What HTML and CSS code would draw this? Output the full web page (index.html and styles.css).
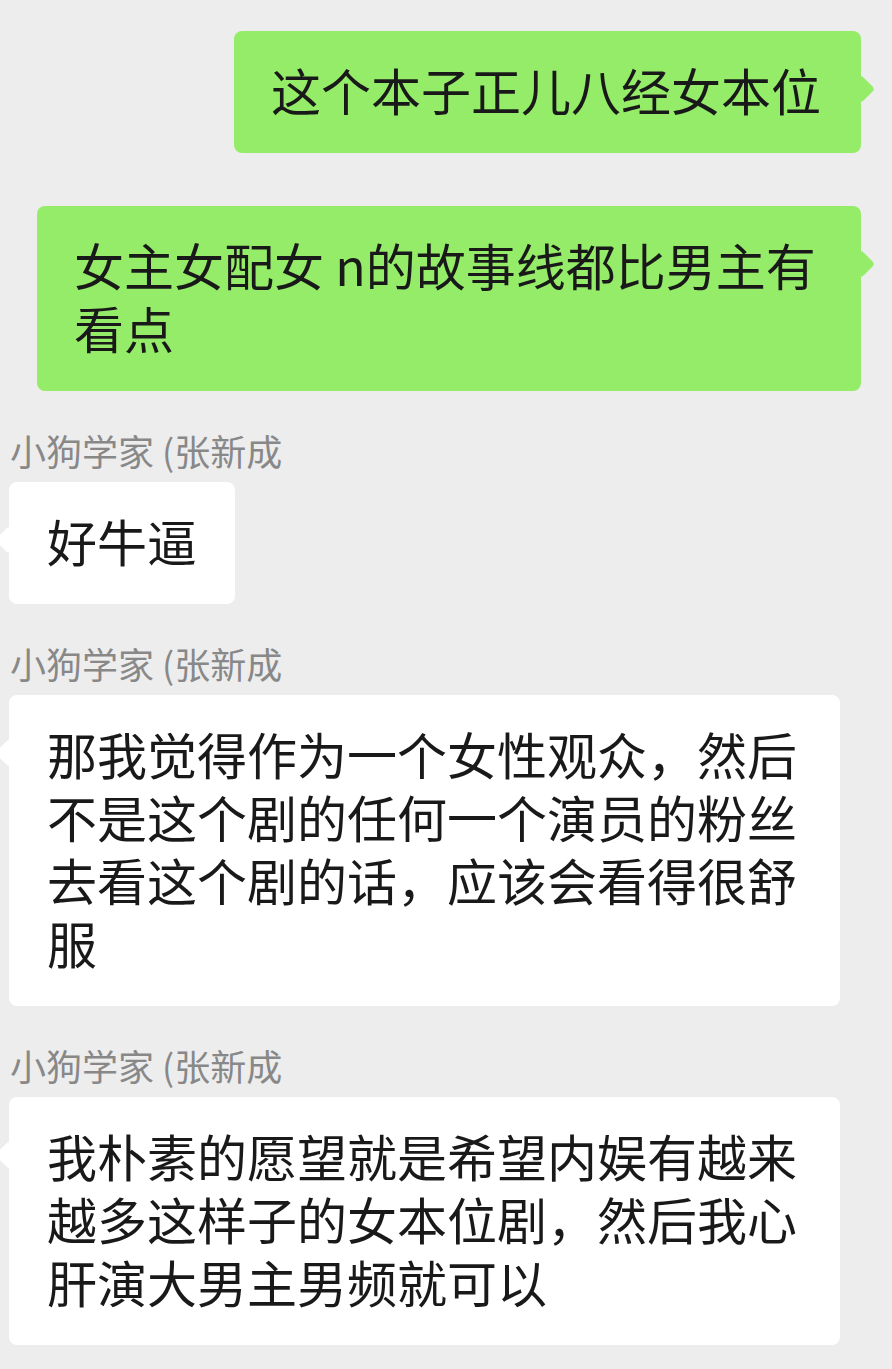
FILE: index.html
```html
<!DOCTYPE html>
<html lang="zh-CN">
<head>
    <meta charset="UTF-8">
    <meta name="viewport" content="width=device-width, initial-scale=1.0">
    <title>聊天记录</title>
    <link rel="stylesheet" href="styles.css">
</head>
<body>
    <div class="chat">
        <div class="row mine">
            <div class="bubble">这个本子正儿八经女本位</div>
        </div>
        <div class="row mine gap">
            <div class="bubble">女主女配女 n的故事线都比男主有看点</div>
        </div>

        <div class="row theirs">
            <div class="name">小狗学家 (张新成</div>
            <div class="bubble">好牛逼</div>
        </div>

        <div class="row theirs">
            <div class="name">小狗学家 (张新成</div>
            <div class="bubble">那我觉得作为一个女性观众，然后不是这个剧的任何一个演员的粉丝去看这个剧的话，应该会看得很舒服</div>
        </div>

        <div class="row theirs">
            <div class="name">小狗学家 (张新成</div>
            <div class="bubble">我朴素的愿望就是希望内娱有越来越多这样子的女本位剧，然后我心肝演大男主男频就可以</div>
        </div>
    </div>
</body>
</html>
```

FILE: styles.css
```css
body {
    margin: 0;
    background-color: #ededed;
    font-family: "Noto Sans CJK SC", "Noto Sans", sans-serif;
    color: #191919;
}

.chat {
    width: 892px;
    height: 1369px;
    box-sizing: border-box;
    padding: 31px 31px 0 9px;
    overflow: hidden;
    display: flex;
    flex-direction: column;
}

.row {
    display: flex;
}

.row.mine {
    justify-content: flex-end;
}

.row.mine.gap {
    margin-top: 53px;
}

.row.theirs {
    flex-direction: column;
    align-items: flex-start;
}

.name {
    margin: 39px 0 12px 1px;
    font-size: 36px;
    line-height: 40px;
    color: #888;
}

.bubble {
    position: relative;
    box-sizing: border-box;
    padding: 27px 40px 32px 37px;
    font-size: 50px;
    line-height: 63px;
    border-radius: 8px;
    word-break: break-all;
}

.mine .bubble {
    max-width: 824px;
    background-color: #95ec69;
}

.theirs .bubble {
    max-width: 831px;
    padding-left: 38px;
    padding-right: 38px;
    background-color: #fff;
}

/* little tail pointing at the sender */
.bubble::after {
    content: "";
    position: absolute;
    top: 48px;
    width: 20px;
    height: 20px;
    border-radius: 4px;
    transform: rotate(45deg);
    background-color: inherit;
}

.mine .bubble::after {
    right: -10px;
}

.theirs .bubble::after {
    left: -10px;
}
```
